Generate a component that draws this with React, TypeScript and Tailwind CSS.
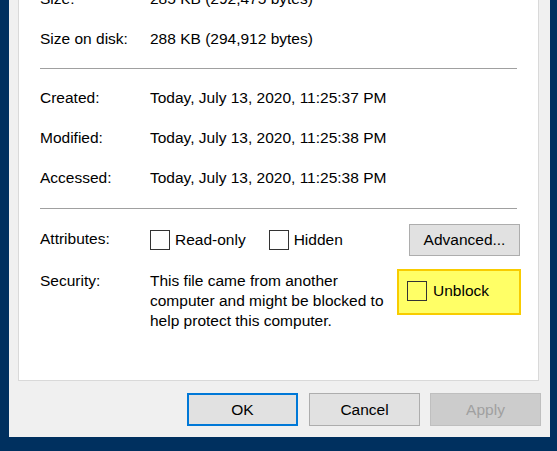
const font = { fontFamily: '"Liberation Sans", Arial, sans-serif' };

const Checkbox = () => (
  <span className="block w-[20px] h-[20px] border border-[#333333] bg-transparent shrink-0" />
);

const Row = ({ label, value, className = "" }: { label: string; value: string; className?: string }) => (
  <div className={`flex h-[20px] leading-[20px] ${className}`}>
    <div className="w-[110px] shrink-0">{label}</div>
    <div className="whitespace-nowrap">{value}</div>
  </div>
);

export default function App() {
  return (
    <div
      className="w-[557px] h-[451px] bg-[#00305f] overflow-hidden pl-[9px] text-[15.5px] text-black"
      style={font}
    >
      <div className="w-[541px] h-[437px] bg-[#f0f0f0] flex flex-col pl-[9px] pr-[9px]">
        {/* properties panel */}
        <div className="w-[521px] h-[381px] bg-white border border-t-0 border-[#d9d9d9] overflow-hidden pl-[21px] pr-[21px]">
          <Row label="Size:" value="285 KB (292,475 bytes)" className="mt-[-11px]" />
          <Row label="Size on disk:" value="288 KB (294,912 bytes)" className="mt-[20px]" />
          <div className="mt-[19px] h-px bg-[#a0a0a0]" />
          <Row label="Created:" value="Today, July 13, 2020, 11:25:37 PM" className="mt-[19px]" />
          <Row label="Modified:" value="Today, July 13, 2020, 11:25:38 PM" className="mt-[20px]" />
          <Row label="Accessed:" value="Today, July 13, 2020, 11:25:38 PM" className="mt-[20px]" />
          <div className="mt-[20px] h-px bg-[#a0a0a0]" />

          <div className="mt-[15px] flex items-center h-[32px] leading-[20px]">
            <div className="w-[110px] shrink-0 -mt-[3px]">Attributes:</div>
            <label className="flex items-center gap-[5px] mr-[23px]">
              <Checkbox />
              <span>Read-only</span>
            </label>
            <label className="flex items-center gap-[5px]">
              <Checkbox />
              <span>Hidden</span>
            </label>
            <button className="ml-auto -mr-[3px] w-[111px] h-[32px] bg-[#e1e1e1] border border-[#adadad] leading-[20px]">
              Advanced...
            </button>
          </div>

          <div className="mt-[13px] flex items-start leading-[20px]">
            <div className="w-[110px] shrink-0 pt-[2px]">Security:</div>
            <div className="pt-[2px] whitespace-nowrap">
              This file came from another
              <br />
              computer and might be blocked to
              <br />
              help protect this computer.
            </div>
            <label className="ml-auto -mr-[4px] w-[124px] h-[46px] bg-[#ffff66] border-2 border-[#f8cc00] flex items-center gap-[6px] pl-[8px] pb-[2px]">
              <Checkbox />
              <span>Unblock</span>
            </label>
          </div>
        </div>

        {/* dialog buttons */}
        <div className="mt-[12px] flex justify-end leading-[20px]">
          <button className="w-[111px] h-[33px] mr-[11px] bg-[#e1e1e1] border-2 border-[#0078d7]">OK</button>
          <button className="w-[111px] h-[33px] mr-[10px] bg-[#e1e1e1] border border-[#adadad]">Cancel</button>
          <button className="w-[111px] h-[33px] bg-[#cccccc] border border-[#bfbfbf] text-[#a0a0a0]">Apply</button>
        </div>
      </div>
    </div>
  );
}
